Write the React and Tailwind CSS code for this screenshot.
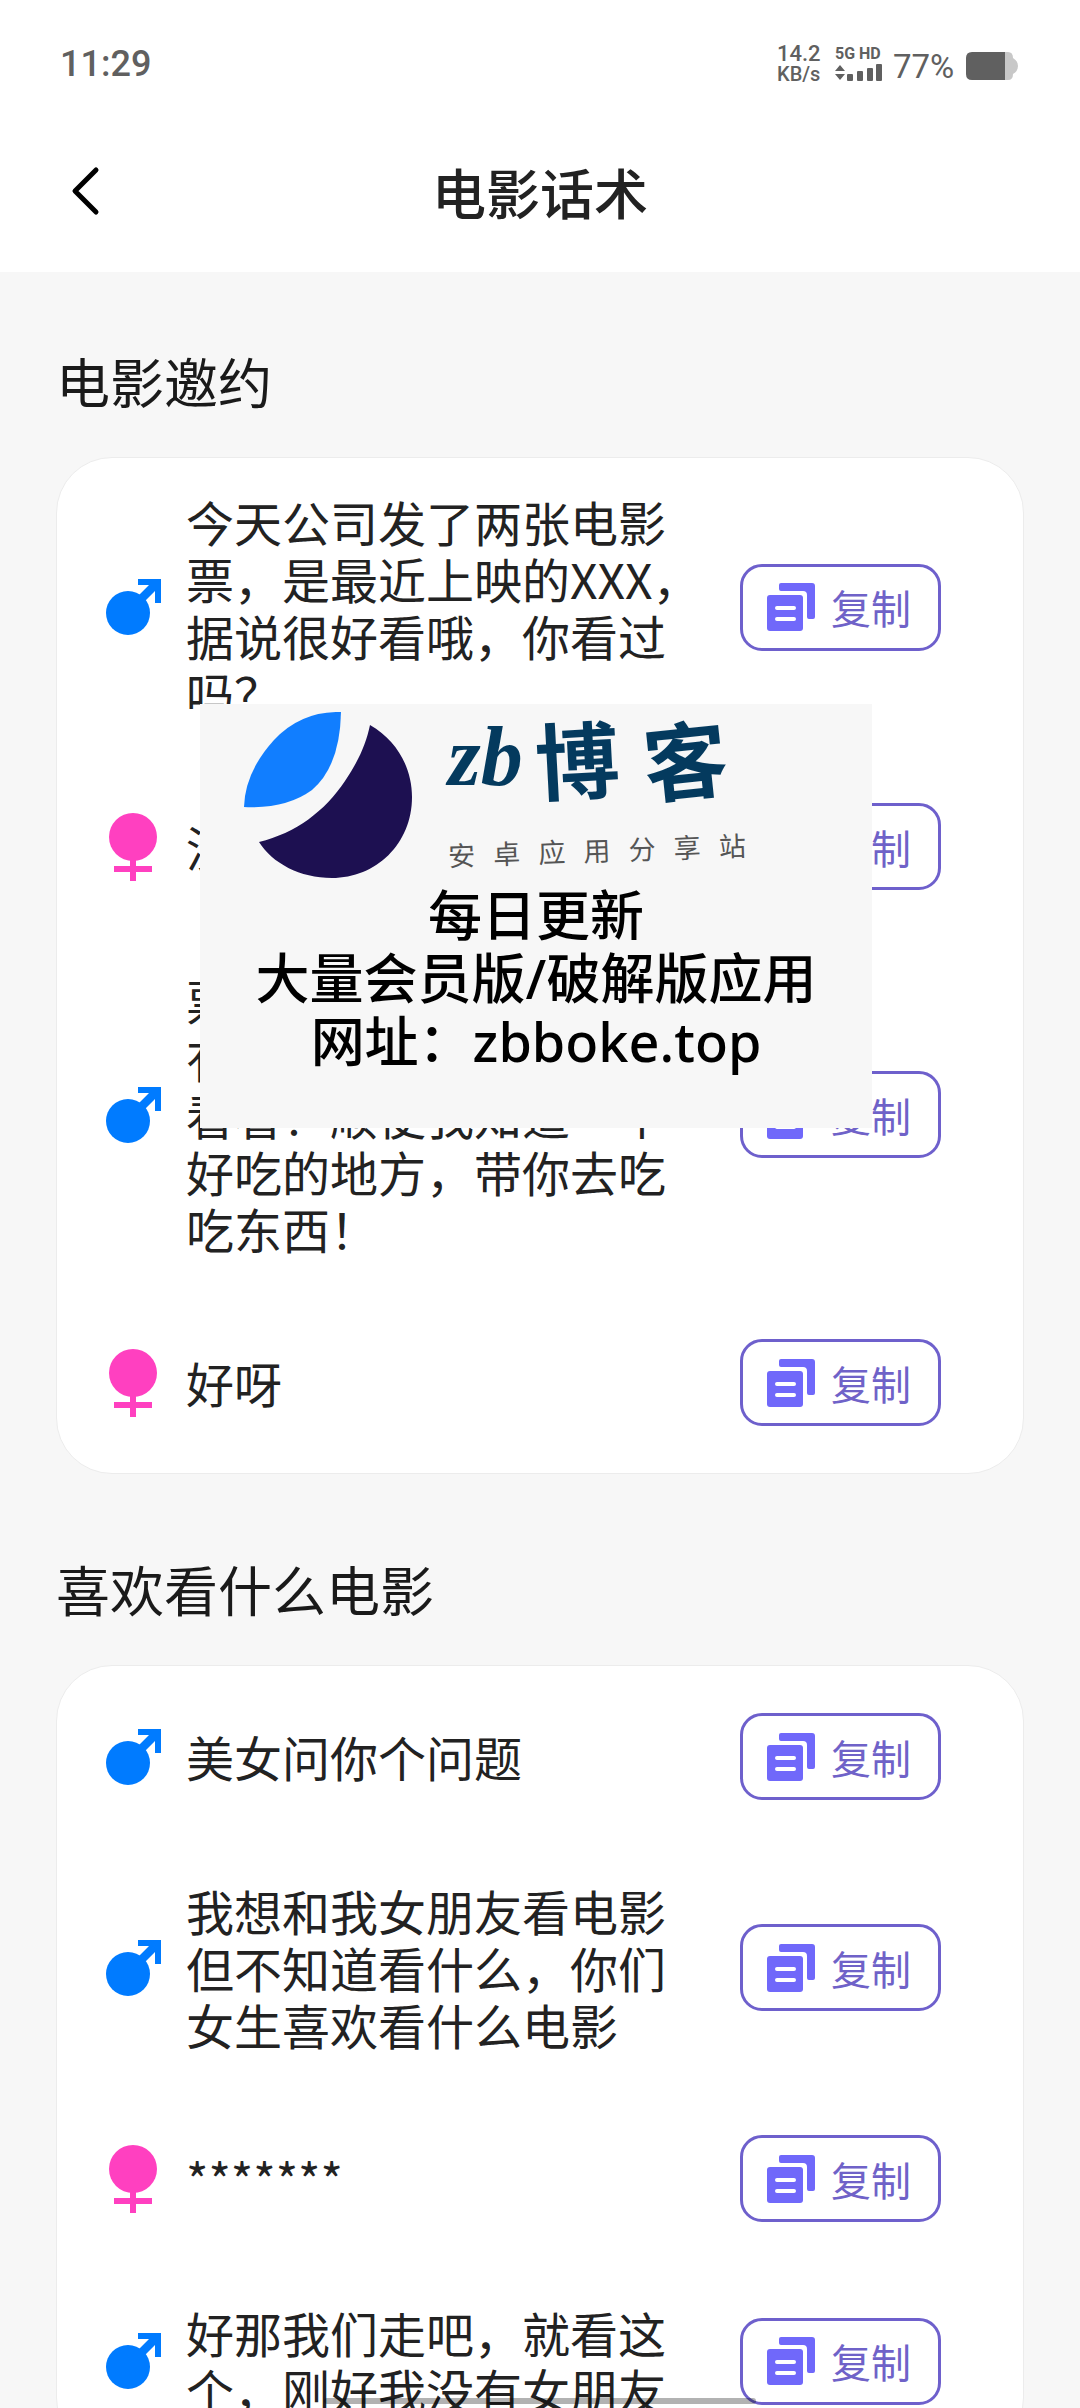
import React from "react";

const sections = [
  {
    title: "电影邀约",
    banner: true,
    rows: [
      { who: "male", text: "今天公司发了两张电影票，是最近上映的XXX，据说很好看哦，你看过吗？" },
      { who: "female", text: "没" },
      { who: "male", text: "票\n有\n看看！顺便我知道一个好吃的地方，带你去吃吃东西！" },
      { who: "female", text: "好呀" },
    ],
  },
  {
    title: "喜欢看什么电影",
    rows: [
      { who: "male", text: "美女问你个问题" },
      { who: "male", text: "我想和我女朋友看电影但不知道看什么，你们女生喜欢看什么电影" },
      { who: "female", text: "*******" },
      { who: "male", text: "好那我们走吧，就看这个，刚好我没有女朋友" },
    ],
  },
];

function MaleIcon() {
  return (
    <svg viewBox="0 0 56 56" className="h-14 w-14 shrink-0" role="img" aria-label="男">
      <circle cx="22" cy="34" r="22" fill="#007bff" />
      <path d="M32 0H55V24H49V12L38 23L32 17L43 6H32Z" fill="#007bff" />
    </svg>
  );
}

function FemaleIcon() {
  return (
    <svg viewBox="0 0 56 68" className="h-[68px] w-14 shrink-0" role="img" aria-label="女">
      <circle cx="27" cy="24" r="24" fill="#ff40c0" />
      <path d="M24 46H30V53H46V59H30V68H24V59H8V53H24Z" fill="#ff40c0" />
    </svg>
  );
}

function CopyIcon() {
  return (
    <svg viewBox="0 0 48 48" className="h-12 w-12 shrink-0" aria-hidden="true">
      <path d="M14 0H45Q48 0 48 3V34Q48 36 46 36H42Q40 36 40 34V12Q40 8 36 8H14Q12 8 12 6V2Q12 0 14 0Z" fill="#7068fa" />
      <rect x="0" y="12" width="36" height="36" rx="3" fill="#7068fa" />
      <path d="M10 25H27M10 36H27" stroke="#fff" strokeWidth="4" strokeLinecap="round" />
    </svg>
  );
}

function StatusBar() {
  return (
    <div className="flex h-32 items-start justify-between pl-[60px] pr-[62px] pt-11 font-[Roboto,sans-serif] text-[#606060]">
      <span className="text-[36px] font-medium leading-10">11:29</span>
      <div className="flex items-start">
        <div className="w-[58px] text-[20px] font-medium leading-5">
          <div className="text-[22px]">14.2</div>
          <div className="text-[20px]">KB/s</div>
        </div>
        <div className="w-[58px]">
          <div className="text-[16px] font-bold leading-5">5G HD</div>
          <svg viewBox="0 0 48 18" className="h-[18px] w-12" fill="#606060" aria-hidden="true">
            <path d="M0 7L5 1L10 7ZM0 10H10L5 16Z" />
            <rect x="12" y="10" width="6" height="7" rx="1" />
            <rect x="22" y="7" width="6" height="10" rx="1" />
            <rect x="32" y="4" width="6" height="13" rx="1" />
            <rect x="41" y="0" width="6" height="17" rx="1" />
          </svg>
        </div>
        <span className="w-[73px] text-[33px] leading-[46px]">77%</span>
        <svg viewBox="0 0 52 28" className="mt-2 h-7 w-[52px]" aria-hidden="true">
          <path d="M36 0H42Q47 0 47 6Q52 9 52 14Q52 19 47 22Q47 28 42 28H36Z" fill="#c8c8c8" />
          <path d="M6 0H39V28H6Q0 28 0 22V6Q0 0 6 0Z" fill="#606060" />
        </svg>
      </div>
    </div>
  );
}

function Banner() {
  return (
    <aside className="absolute left-[143px] top-[246px] h-[424px] w-[672px] bg-[#f7f7f7] pt-2 text-black">
      <div className="flex h-[172px] pl-11">
        <svg viewBox="0 0 168 168" className="h-[168px] w-[168px] shrink-0" aria-hidden="true">
          <path d="M97 0Q96 54 68 78Q42 97 0 95Q1 60 30 28Q57 -1 97 0Z" fill="#117eff" />
          <path d="M126 13C154 29 168 57 168 85C168 132 132 166 88 166C56 166 28 151 15 130C52 121 81 99 101 69C115 48 122 32 126 13Z" fill="#1d1051" />
        </svg>
        <div className="pl-9 text-[#043a5e]">
          <div className="flex h-[90px] items-center text-[84px] font-bold leading-[90px]">
            <span className="font-['Liberation_Serif'] italic">zb</span>
            <span className="ml-3 -rotate-3">博</span>
            <span className="ml-6 -rotate-6">客</span>
          </div>
          <div className="mt-8 flex w-[298px] -rotate-2 justify-between text-[27px] leading-8 text-[#555]">
            {Array.from("安卓应用分享站").map((c) => (
              <span key={c}>{c}</span>
            ))}
          </div>
        </div>
      </div>
      <p className="text-center font-['Noto_Sans','Noto_Sans_CJK_SC',sans-serif] text-[54px] font-medium leading-[63px]">
        每日更新
        <br />
        大量会员版/破解版应用
        <br />
        网址：zbboke.top
      </p>
    </aside>
  );
}

function Row({ who, text }) {
  return (
    <li className="flex items-center py-[35px] pl-[49px] pr-[82px]">
      {who === "male" ? <MaleIcon /> : <FemaleIcon />}
      <div className="ml-6 mr-[34px] flex min-h-[111px] min-w-0 flex-1 items-center">
        <p className="whitespace-pre-line break-all text-[48px] leading-[57px] text-[#222]">{text}</p>
      </div>
      <button
        type="button"
        className="flex h-[87px] w-[201px] shrink-0 items-center gap-4 rounded-[22px] border-[3px] border-[#6e60cc] pl-6 text-[40px] leading-none text-[#6f62c8]"
      >
        <CopyIcon />
        复制
      </button>
    </li>
  );
}

export default function App() {
  return (
    <div className="relative h-screen overflow-hidden bg-[#f7f7f7] font-['Noto_Sans_CJK_SC',sans-serif]">
      <header className="bg-white">
        <StatusBar />
        <div className="relative flex h-36 items-start justify-center pt-[30px]">
          <button type="button" aria-label="返回" className="absolute left-[60px] top-[34px] p-1">
            <svg viewBox="0 0 48 56" className="h-14 w-12" aria-hidden="true">
              <path d="M32 4L11 25L32 46" fill="none" stroke="#000" strokeWidth="5" strokeLinecap="round" strokeLinejoin="round" />
            </svg>
          </button>
          <h1 className="text-[54px] font-medium leading-[68px] text-[#222]">电影话术</h1>
        </div>
      </header>
      <main className="flex flex-col gap-[85px] px-14 pt-[79px]">
        {sections.map((s) => (
          <section key={s.title}>
            <h2 className="mb-[46px] text-[54px] leading-[60px] text-[#1a1a1a]">{s.title}</h2>
            <div className="relative rounded-[56px] border border-[#ececec] bg-white">
              <ul>
                {s.rows.map((r) => (
                  <Row key={r.text} {...r} />
                ))}
              </ul>
              {s.banner && <Banner />}
            </div>
          </section>
        ))}
      </main>
      <div className="absolute inset-x-[30%] bottom-1 h-[6px] rounded-full bg-black/30" />
    </div>
  );
}
